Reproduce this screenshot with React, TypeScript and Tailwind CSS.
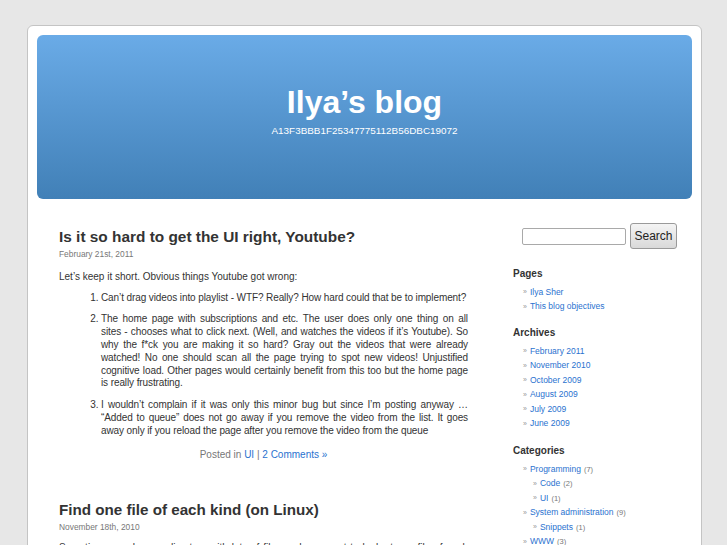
import React from "react";

const font = { fontFamily: '"Liberation Sans", Arial, sans-serif' };

const PAGES = ["Ilya Sher", "This blog objectives"];
const ARCHIVES = ["February 2011", "November 2010", "October 2009", "August 2009", "July 2009", "June 2009"];
const CATEGORIES: Array<{ name: string; count: number; sub?: boolean }> = [
  { name: "Programming", count: 7 },
  { name: "Code", count: 2, sub: true },
  { name: "UI", count: 1, sub: true },
  { name: "System administration", count: 9 },
  { name: "Snippets", count: 1, sub: true },
  { name: "WWW", count: 3 },
];

// the list items keep the reference's line breaks; every line but the last is justified
const ITEMS: string[][] = [
  ["Can’t drag videos into playlist - WTF? Really? How hard could that be to implement?"],
  [
    "The home page with subscriptions and etc. The user does only one thing on all",
    "sites - chooses what to click next. (Well, and watches the videos if it’s Youtube). So",
    "why the f*ck you are making it so hard? Gray out the videos that were already",
    "watched! No one should scan all the page trying to spot new videos! Unjustified",
    "cognitive load. Other pages would certainly benefit from this too but the home page",
    "is really frustrating.",
  ],
  [
    "I wouldn’t complain if it was only this minor bug but since I’m posting anyway …",
    "“Added to queue” does not go away if you remove the video from the list. It goes",
    "away only if you reload the page after you remove the video from the queue",
  ],
];

function SideItem({ children, sub }: { children: React.ReactNode; sub?: boolean }) {
  return (
    <li className="flex h-[14.5px] items-center pl-[10px]">
      <span className={`text-[7px] text-[#999] ${sub ? "ml-[10px]" : ""} mr-[3px]`}>»</span>
      {children}
    </li>
  );
}

function Heading({ children }: { children: React.ReactNode }) {
  return <h2 className="text-[10px] font-bold leading-none text-[#333]">{children}</h2>;
}

export default function App() {
  return (
    <div className="h-[545px] overflow-hidden bg-[#e7e7e7] pt-[25px]" style={font}>
      <div className="ml-[27px] h-[800px] w-[675px] rounded-[6px] border border-[#c4c4c4] bg-white p-[9px]">
        <header className="flex h-[164px] flex-col items-center rounded-[6px] bg-gradient-to-b from-[#6aabe7] to-[#4180b7] pt-[51px] text-white">
          <h1 className="text-[32px] font-bold leading-none">Ilya’s blog</h1>
          <p className="mt-[8px] text-[9.9px] leading-none">A13F3BBB1F25347775112B56DBC19072</p>
        </header>

        <div className="flex">
          <main className="ml-[22px] w-[409px] text-[10px] leading-[12.8px] text-[#333]">
            <article className="pt-[30px]">
              <h2 className="text-[15.4px] font-bold leading-none text-[#333]">Is it so hard to get the UI right, Youtube?</h2>
              <div className="mt-[6px] text-[8.4px] leading-none text-[#777]">February 21st, 2011</div>
              <p className="mt-[12px]">Let’s keep it short. Obvious things Youtube got wrong:</p>
              <ol className="mt-[8px] list-decimal pl-[42px] tracking-[-0.1px]">
                {ITEMS.map((lines, i) => (
                  <li key={i} className={i > 0 ? "mt-[9px]" : ""}>
                    {lines.map((line, j) => (
                      <span
                        key={j}
                        className={`block whitespace-nowrap ${j < lines.length - 1 ? "text-justify [text-align-last:justify]" : ""}`}
                      >
                        {line}
                      </span>
                    ))}
                  </li>
                ))}
              </ol>
              <p className="mt-[11px] text-center text-[#777]">
                Posted in <a className="text-[#2a72cf]">UI</a> | <a className="text-[#2a72cf]">2 Comments »</a>
              </p>
            </article>

            <article className="pt-[41px]">
              <h2 className="text-[15.2px] font-bold leading-none text-[#333]">Find one file of each kind (on Linux)</h2>
              <div className="mt-[5px] text-[8.4px] leading-none text-[#777]">November 18th, 2010</div>
              <p className="mt-[11px] text-justify">
                Sometimes you have a directory with lots of files and you want to look at one file of each kind to get
                an idea of what is there.
              </p>
            </article>
          </main>

          <aside className="ml-[45px] w-[165px] pt-[24px] text-[8.5px] text-[#2a72cf]">
            <form className="ml-[9px] flex items-center gap-[4px]">
              <input className="h-[17px] w-[104px] rounded-[2px] border border-[#a9a9a9] bg-white" />
              <button
                type="button"
                className="h-[26px] w-[47px] rounded-[3px] border border-[#9a9a9a] bg-gradient-to-b from-[#f4f4f4] to-[#d9d9d9] text-[12px] text-[#222]"
              >
                Search
              </button>
            </form>

            <div className="mt-[20px]">
              <Heading>Pages</Heading>
              <ul className="mt-[6px]">
                {PAGES.map((p) => (
                  <SideItem key={p}>{p}</SideItem>
                ))}
              </ul>
            </div>

            <div className="mt-[14px]">
              <Heading>Archives</Heading>
              <ul className="mt-[6px]">
                {ARCHIVES.map((p) => (
                  <SideItem key={p}>{p}</SideItem>
                ))}
              </ul>
            </div>

            <div className="mt-[15px]">
              <Heading>Categories</Heading>
              <ul className="mt-[6px]">
                {CATEGORIES.map((c) => (
                  <SideItem key={c.name} sub={c.sub}>
                    {c.name}
                    <span className="ml-[3px] text-[7.5px] text-[#777]">({c.count})</span>
                  </SideItem>
                ))}
              </ul>
            </div>
          </aside>
        </div>
      </div>
    </div>
  );
}
